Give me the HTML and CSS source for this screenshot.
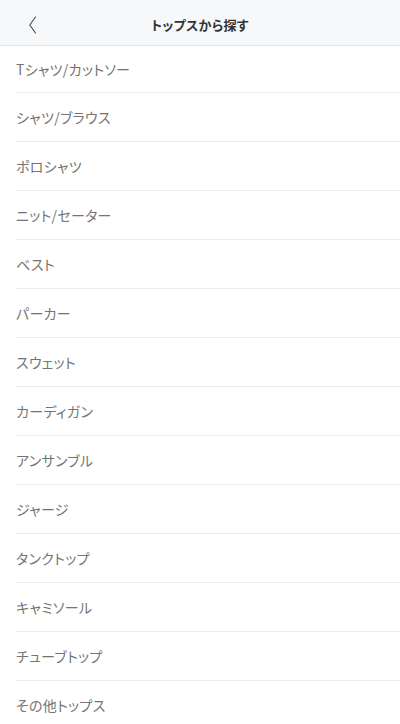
FILE: index.html
```html
<!DOCTYPE html>
<html lang="ja">
<head>
<meta charset="utf-8">
<title>トップスから探す</title>
<link rel="stylesheet" href="styles.css">
</head>
<body>
<header class="nav">
  <button class="back" aria-label="戻る">
    <svg width="10" height="18" viewBox="0 0 10 18"><path d="M7.5 1 L1.8 9 L7.5 17" fill="none" stroke="#444" stroke-width="1.1" stroke-linecap="round" stroke-linejoin="round"/></svg>
  </button>
  <h1 class="title">トップスから探す</h1>
</header>
<ul class="list">
  <li class="item first">Tシャツ/カットソー</li>
  <li class="item">シャツ/ブラウス</li>
  <li class="item">ポロシャツ</li>
  <li class="item">ニット/セーター</li>
  <li class="item">ベスト</li>
  <li class="item">パーカー</li>
  <li class="item">スウェット</li>
  <li class="item">カーディガン</li>
  <li class="item">アンサンブル</li>
  <li class="item">ジャージ</li>
  <li class="item">タンクトップ</li>
  <li class="item">キャミソール</li>
  <li class="item">チューブトップ</li>
  <li class="item">その他トップス</li>
</ul>
</body>
</html>
```
FILE: styles.css
```css
html, body {
  margin: 0;
  padding: 0;
  background: #fff;
  font-family: "Noto Sans CJK JP", "Noto Sans", sans-serif;
  font-feature-settings: "palt";
}
.nav {
  position: relative;
  height: 46px;
  box-sizing: border-box;
  background: #f7f8fa;
  border-bottom: 1px solid #e4e5e8;
  display: flex;
  align-items: center;
  justify-content: center;
  padding-top: 3px;
}
.back {
  position: absolute;
  left: 26px;
  top: 15px;
  width: 14px;
  height: 20px;
  padding: 0;
  border: 0;
  background: none;
  display: flex;
  align-items: center;
  justify-content: center;
}
.title {
  margin: 0;
  font-size: 13px;
  font-weight: 600;
  color: #333;
  letter-spacing: 0.3px;
}
.list {
  list-style: none;
  margin: 0;
  padding: 0;
}
.item {
  margin-left: 16px;
  height: 48px;
  border-bottom: 1px solid #ebebeb;
  display: flex;
  align-items: center;
  font-size: 14px;
  font-weight: 400;
  color: #747474;
  letter-spacing: 0.3px;
}
.item.first {
  height: 46px;
}
```
